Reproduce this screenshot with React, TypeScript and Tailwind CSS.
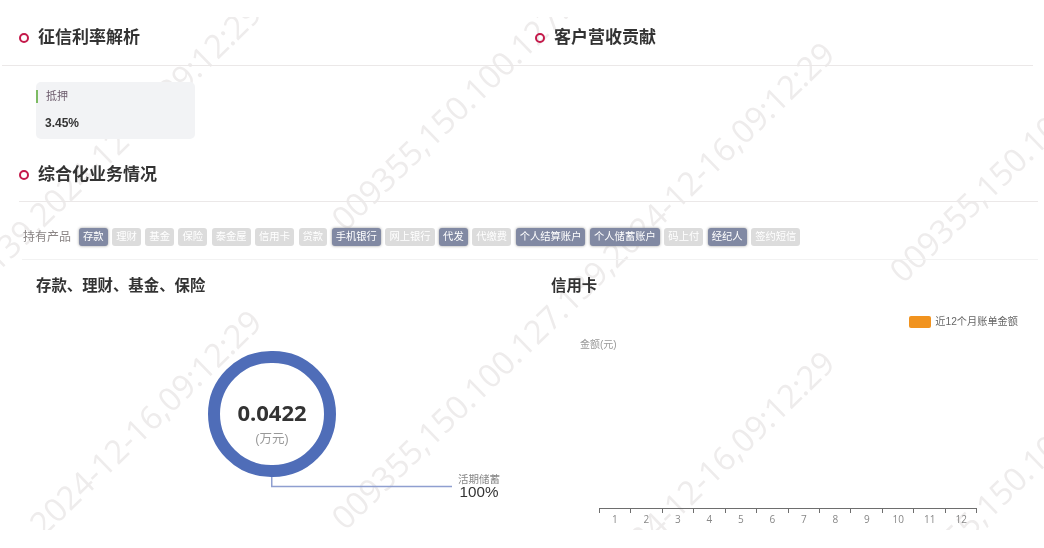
const cn = 'font-["Liberation_Sans","Noto_Sans_CJK_SC",sans-serif]';

const products = [
  { name: '存款', on: true },
  { name: '理财', on: false },
  { name: '基金', on: false },
  { name: '保险', on: false },
  { name: '泰金屋', on: false },
  { name: '信用卡', on: false },
  { name: '贷款', on: false },
  { name: '手机银行', on: true },
  { name: '网上银行', on: false },
  { name: '代发', on: true },
  { name: '代缴费', on: false },
  { name: '个人结算账户', on: true },
  { name: '个人储蓄账户', on: true },
  { name: '码上付', on: false },
  { name: '经纪人', on: true },
  { name: '签约短信', on: false },
];

const months = [1, 2, 3, 4, 5, 6, 7, 8, 9, 10, 11, 12];

// end point of each watermark line, page coordinates
const marks = [
  { x: 255, y: 7 },
  { x: 255, y: 316 },
  { x: 828, y: -251 },
  { x: 828, y: 48 },
  { x: 828, y: 357 },
  { x: 1386, y: -199 },
  { x: 1386, y: 120 },
  { x: 1386, y: 419 },
];

function SectionTitle({ text }: { text: string }) {
  return (
    <div className="flex items-center gap-[9px]">
      <span className="w-[10px] h-[10px] rounded-full border-2 border-[#c4194a]" />
      <span className="text-[17px] leading-[20px] font-bold text-[#333]">{text}</span>
    </div>
  );
}

export default function App() {
  return (
    <div className={`relative w-[1044px] h-[548px] overflow-hidden bg-white blur-[0.4px] ${cn}`}>
      {/* watermark */}
      <div className="absolute left-0 top-[17px] w-[1044px] h-[513px] overflow-hidden pointer-events-none">
        {marks.map((m, i) => (
          <span
            key={i}
            className="absolute whitespace-nowrap text-[32.5px] leading-[34px] text-[#eeecec] font-['Open_Sans',sans-serif] origin-right -rotate-[44deg]"
            style={{ right: 1044 - m.x, top: m.y - 34 }}
          >
            009355,150.100.127.139,2024-12-16,09:12:29
          </span>
        ))}
      </div>

      <div className="relative flex flex-col">
        <div className="flex ml-[2px] w-[1031px] pl-[17px] pt-[28px] pb-[17px] border-b border-[#ebe8e8]">
          <div className="w-[516px]"><SectionTitle text="征信利率解析" /></div>
          <SectionTitle text="客户营收贡献" />
        </div>

        <div className="ml-[36px] mt-[16px] w-[159px] h-[57px] rounded-[5px] bg-[#f2f3f5] flex flex-col">
          <div className="mt-[8px] h-[13px] border-l-2 border-[#7dbb63] pl-[8px] text-[11px] leading-[13px] text-[#6b5a6b]">抵押</div>
          <div className="mt-[13px] pl-[9px] text-[12px] leading-[14px] font-bold text-[#333]">3.45%</div>
        </div>

        <div className="ml-[19px] mt-[26px] w-[1019px] pb-[16px] border-b border-[#ebe8e8]">
          <SectionTitle text="综合化业务情况" />
        </div>

        <div className="flex items-center ml-[22px] w-[1016px] h-[58px] pt-[13px] pl-[1px] gap-[4.55px] border-b border-[#f2f2f2]">
          <span className="text-[12px] text-[#8a8484] mr-[3.5px]">持有产品</span>
          {products.map((p) => (
            <span
              key={p.name}
              className={`h-[18px] px-[4px] rounded-[3px] text-[10.3px] leading-[18px] text-white ${
                p.on ? 'bg-[#8189a3] shadow-[0_0_3px_#9a9a9a]' : 'bg-[#dcdcdc]'
              }`}
            >
              {p.name}
            </span>
          ))}
        </div>

        <div className="flex">
          <div className="w-[551px] pl-[36px] pt-[17px]">
            <div className="text-[15.4px] leading-[18px] font-bold text-[#333]">存款、理财、基金、保险</div>
            <div className="mt-[56px] ml-[172px] w-[128px] h-[126px] pt-[18px] rounded-full border-[12px] border-[#4f6db8] flex flex-col items-center justify-center">
              <span className="text-[22px] leading-[24px] font-bold text-[#333] font-['Open_Sans',sans-serif]">0.0422</span>
              <span className="mt-[8px] text-[12.5px] leading-[14px] text-[#999]">(万元)</span>
            </div>
            <div className="relative">
              <svg className="absolute left-[235px] top-0" width="182" height="14">
                <path d="M0.75 0V9.5H181" fill="none" stroke="#8f9fd0" strokeWidth="1.5" />
              </svg>
              <div className="absolute left-[422px] top-[-3px] w-[42px] flex flex-col items-center">
                <span className="text-[10.5px] leading-[11px] whitespace-nowrap text-[#888]">活期储蓄</span>
                <span className="text-[15.2px] leading-[14px] text-[#333]">100%</span>
              </div>
            </div>
          </div>

          <div className="flex-1 pt-[17px]">
            <div className="text-[15.4px] leading-[18px] font-bold text-[#333]">信用卡</div>
            <div className="flex items-center justify-end gap-[4px] mt-[21px] pr-[26px]">
              <span className="w-[22px] h-[12px] rounded-[2px] bg-[#f1931f]" />
              <span className="text-[10.2px] leading-[12px] text-[#666]">近12个月账单金额</span>
            </div>
            <div className="ml-[29px] mt-[11px] text-[10px] leading-[12px] text-[#999]">金额(元)</div>
            <div className="ml-[48px] mt-[157px] w-[378px]">
              <div className="flex border-t border-[#6e6e6e]">
                {months.map((m) => (
                  <div key={m} className="flex-1 h-[4px] border-l border-[#6e6e6e] last:border-r" />
                ))}
              </div>
              <div className="flex">
                {months.map((m) => (
                  <div key={m} className="flex-1 text-center text-[10px] leading-[12px] text-[#888] font-['Open_Sans',sans-serif]">
                    {m}
                  </div>
                ))}
              </div>
            </div>
          </div>
        </div>
      </div>
    </div>
  );
}
